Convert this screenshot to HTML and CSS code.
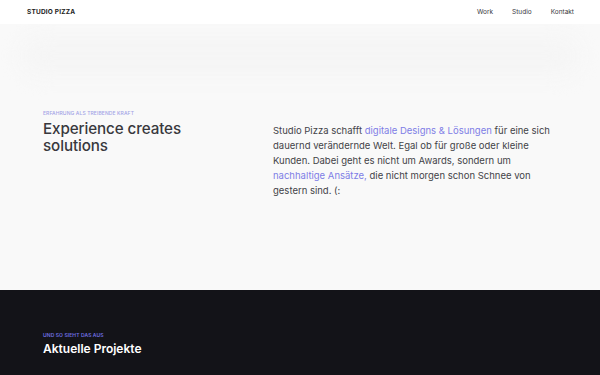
FILE: index.html
```html
<!DOCTYPE html>
<html lang="de">
<head>
    <meta charset="UTF-8">
    <meta name="viewport" content="width=device-width, initial-scale=1.0">
    <title>Studio Pizza</title>
    <link rel="stylesheet" href="styles.css">
</head>
<body>
    <header class="site-header">
        <a class="logo" href="#">Studio Pizza</a>
        <nav class="main-nav">
            <a href="#">Work</a>
            <a href="#">Studio</a>
            <a href="#">Kontakt</a>
        </nav>
    </header>

    <section class="intro">
        <div class="intro-glow"></div>
        <div class="intro-inner">
            <div class="intro-title">
                <div class="eyebrow">Erfahrung als treibende Kraft</div>
                <h1>Experience creates solutions</h1>
            </div>
            <p class="intro-text">
                Studio Pizza schafft <a href="#">digitale Designs &amp; Lösungen</a> für eine sich
                dauernd verändernde Welt. Egal ob für große oder kleine Kunden. Dabei geht es nicht
                um Awards, sondern um <a href="#">nachhaltige Ansätze,</a> die nicht morgen schon
                Schnee von gestern sind. (:
            </p>
        </div>
    </section>

    <section class="projects">
        <div class="eyebrow eyebrow-dark">Und so sieht das aus</div>
        <h2>Aktuelle Projekte</h2>
    </section>
</body>
</html>
```

FILE: styles.css
```css
body {
    margin: 0;
    font-family: Inter, "Noto Sans", sans-serif;
    color: #38383d;
    background-color: #f9f9f9;
}

a {
    text-decoration: none;
    color: inherit;
}

.site-header {
    height: 24px;
    padding: 0 26px 0 27px;
    display: flex;
    align-items: center;
    justify-content: space-between;
    background-color: #ffffff;
}

.logo {
    font-size: 6.5px;
    font-weight: 700;
    letter-spacing: 0.2px;
    text-transform: uppercase;
    color: #1d1d22;
}

.main-nav {
    display: flex;
    gap: 19px;
}

.main-nav a {
    font-size: 6.5px;
    color: #38383d;
}

.intro {
    position: relative;
    height: 266px;
    overflow: hidden;
}

.intro-glow {
    position: absolute;
    top: 12px;
    left: 20px;
    right: 20px;
    height: 40px;
    border-radius: 20px;
    background-color: #f5f5f5;
    filter: blur(10px);
}

.intro-inner {
    position: relative;
    display: grid;
    grid-template-columns: 230px 1fr;
    padding: 86px 30px 0 43px;
}

.eyebrow {
    font-size: 5px;
    font-weight: 500;
    letter-spacing: 0.1px;
    text-transform: uppercase;
    color: #a3a3e6;
}

.intro-title h1 {
    max-width: 150px;
    margin: 4px 0 0 0;
    font-size: 15.2px;
    font-weight: 500;
    line-height: 17px;
    letter-spacing: -0.1px;
    color: #38383d;
}

.intro-text {
    max-width: 282px;
    margin: 13px 0 0 0;
    font-size: 9.5px;
    line-height: 15px;
    color: #434348;
}

.intro-text a {
    color: #7e7ee6;
}

.projects {
    height: 43px;
    padding: 42px 43px 0 43px;
    background-color: #131318;
}

.eyebrow-dark {
    color: #6f6fe0;
    font-weight: 600;
}

.projects h2 {
    margin: 3px 0 0 0;
    font-size: 12px;
    font-weight: 600;
    color: #ffffff;
}
```
